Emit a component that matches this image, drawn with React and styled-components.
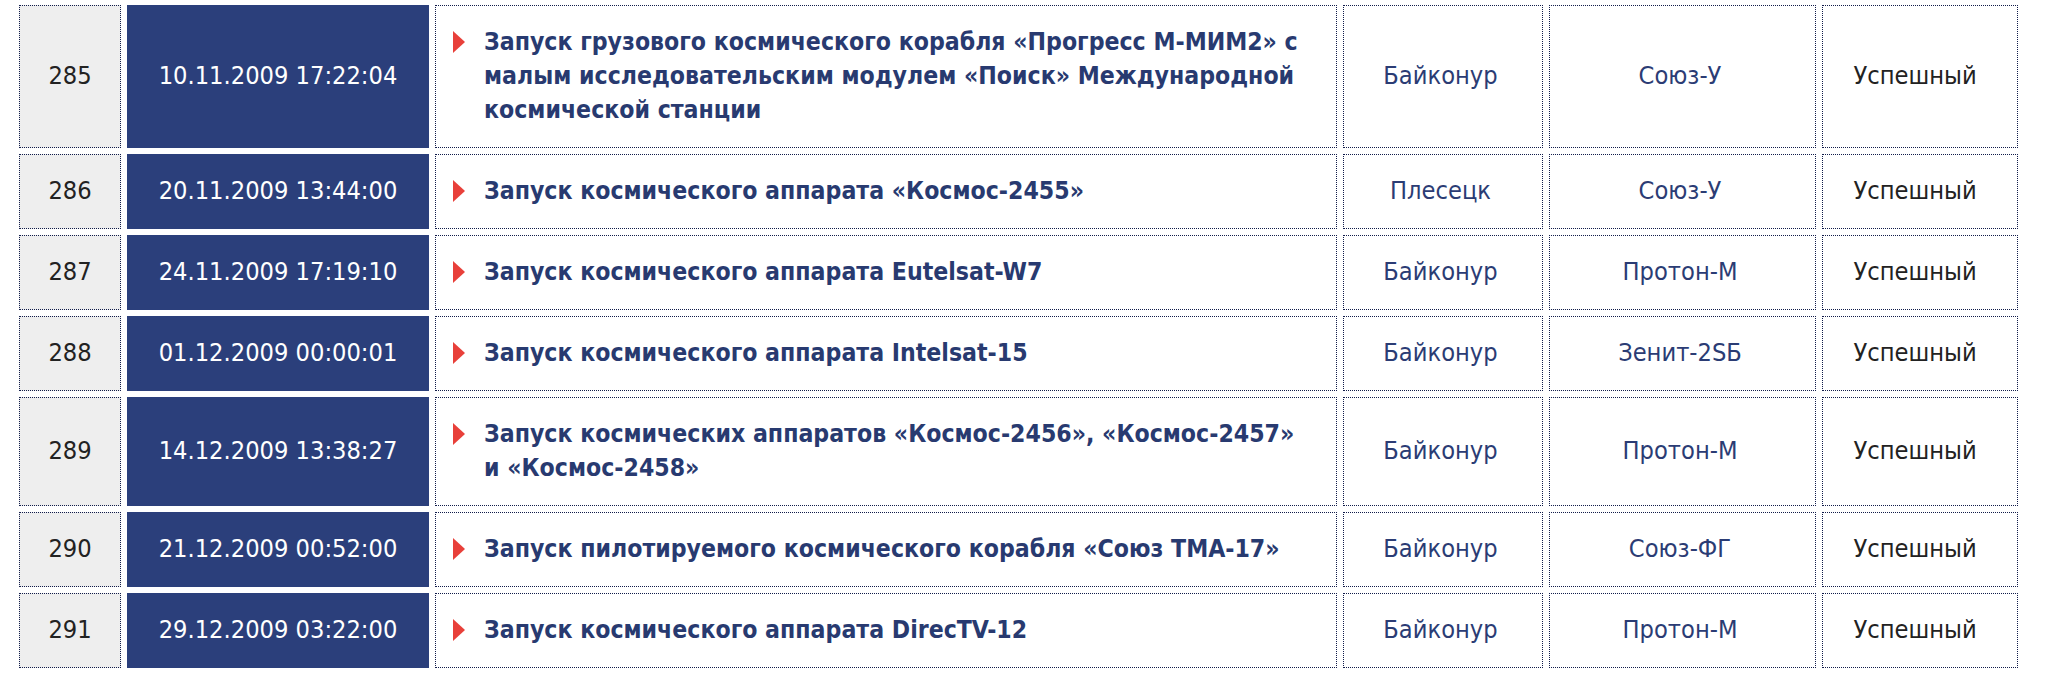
import React from "react";
import styled, { createGlobalStyle } from "styled-components";

const GlobalStyle = createGlobalStyle`
  body {
    margin: 0;
    background: #ffffff;
    font-family: "DejaVu Sans Condensed", "DejaVu Sans", sans-serif;
  }
`;

const navy = "#2b3c74";

const Table = styled.table`
  border-collapse: separate;
  border-spacing: 6px;
  table-layout: fixed;
  width: 2011px;
  margin: -1px 0 0 13px;
  font-size: 25.2px;
  line-height: 34px;
`;

const Col = styled.col`
  width: ${(p) => p.$w}px;
`;

const Cell = styled.td`
  box-sizing: border-box;
  padding: 19px 19px 20px 14px;
  border: 1px dotted #111c4a;
  text-align: center;
  vertical-align: middle;
  background: #fff;
  color: ${navy};
`;

const NumCell = styled(Cell)`
  padding: 19px 16px 20px;
  background: #eeeeee;
  color: #222;
`;

const DateCell = styled(Cell)`
  padding: 19px 16px 20px;
  background: #2b3f7b;
  border: 1px solid #2b3f7b;
  color: #fff;
`;

const TitleCell = styled(Cell)`
  text-align: left;
  padding: 19px 24px 20px 17px;
`;

const ResultCell = styled(Cell)`
  padding: 19px 24px 20px 14px;
  color: #222;
`;

const Title = styled.div`
  display: flex;
  align-items: flex-start;
  gap: 19px;
`;

const Arrow = styled.span`
  flex: none;
  width: 0;
  height: 0;
  margin-top: 6px;
  border-top: 11px solid transparent;
  border-bottom: 11px solid transparent;
  border-left: 12px solid #e8403a;
`;

const TitleText = styled.span`
  font-size: 24.6px;
  font-weight: bold;
  color: #283a70;
`;

const launches = [
  {
    n: 285,
    date: "10.11.2009 17:22:04",
    title:
      "Запуск грузового космического корабля «Прогресс М-МИМ2» с малым исследовательским модулем «Поиск» Международной космической станции",
    site: "Байконур",
    rocket: "Союз-У",
  },
  { n: 286, date: "20.11.2009 13:44:00", title: "Запуск космического аппарата «Космос-2455»", site: "Плесецк", rocket: "Союз-У" },
  { n: 287, date: "24.11.2009 17:19:10", title: "Запуск космического аппарата Eutelsat-W7", site: "Байконур", rocket: "Протон-М" },
  { n: 288, date: "01.12.2009 00:00:01", title: "Запуск космического аппарата Intelsat-15", site: "Байконур", rocket: "Зенит-2SБ" },
  {
    n: 289,
    date: "14.12.2009 13:38:27",
    title: "Запуск космических аппаратов «Космос-2456», «Космос-2457» и «Космос-2458»",
    site: "Байконур",
    rocket: "Протон-М",
  },
  { n: 290, date: "21.12.2009 00:52:00", title: "Запуск пилотируемого космического корабля «Союз ТМА-17»", site: "Байконур", rocket: "Союз-ФГ" },
  { n: 291, date: "29.12.2009 03:22:00", title: "Запуск космического аппарата DirecTV-12", site: "Байконур", rocket: "Протон-М" },
];

const widths = [102, 302, 902, 200, 267, 196];

export default function App() {
  return (
    <>
      <GlobalStyle />
      <Table>
        <colgroup>
          {widths.map((w, i) => (
            <Col key={i} $w={w} />
          ))}
        </colgroup>
        <tbody>
          {launches.map((l) => (
            <tr key={l.n}>
              <NumCell>{l.n}</NumCell>
              <DateCell>{l.date}</DateCell>
              <TitleCell>
                <Title>
                  <Arrow />
                  <TitleText>{l.title}</TitleText>
                </Title>
              </TitleCell>
              <Cell>{l.site}</Cell>
              <Cell>{l.rocket}</Cell>
              <ResultCell>Успешный</ResultCell>
            </tr>
          ))}
        </tbody>
      </Table>
    </>
  );
}
